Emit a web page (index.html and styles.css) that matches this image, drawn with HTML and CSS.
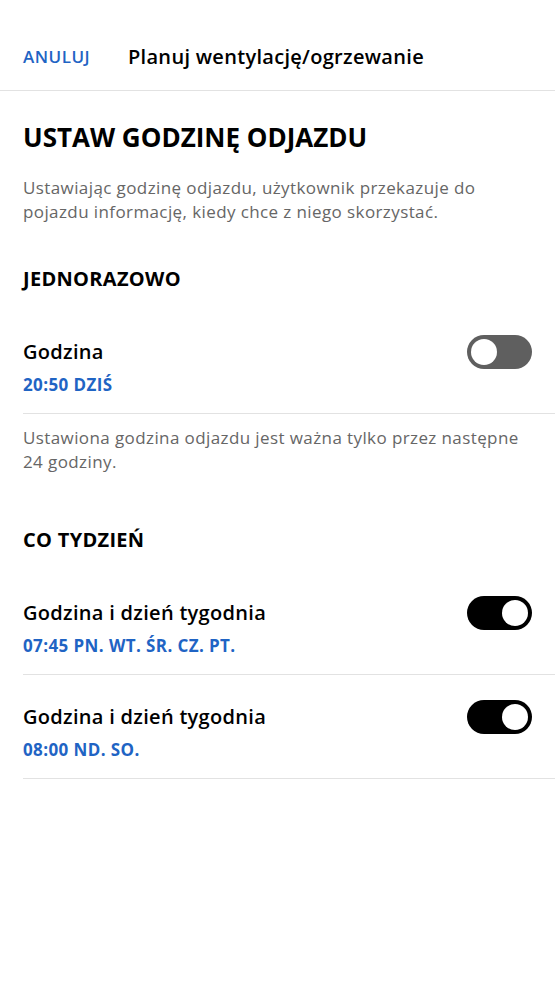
FILE: index.html
```html
<!DOCTYPE html>
<html lang="pl">
<head>
  <meta charset="UTF-8">
  <meta name="viewport" content="width=device-width, initial-scale=1.0">
  <title>Planuj wentylację/ogrzewanie</title>
  <link rel="stylesheet" href="styles.css">
</head>
<body>
  <div class="header">
    <span class="cancel">ANULUJ</span>
    <span class="header-title">Planuj wentylację/ogrzewanie</span>
  </div>

  <div class="content">
    <h1>USTAW GODZINĘ ODJAZDU</h1>
    <p class="intro">Ustawiając godzinę odjazdu, użytkownik przekazuje do pojazdu informację, kiedy chce z niego skorzystać.</p>

    <h2>JEDNORAZOWO</h2>
    <div class="row">
      <div class="row-text">
        <div class="row-title">Godzina</div>
        <div class="row-value">20:50 DZIŚ</div>
      </div>
      <div class="toggle"></div>
    </div>
    <p class="note">Ustawiona godzina odjazdu jest ważna tylko przez następne 24 godziny.</p>

    <h2 class="weekly">CO TYDZIEŃ</h2>
    <div class="row">
      <div class="row-text">
        <div class="row-title">Godzina i dzień tygodnia</div>
        <div class="row-value">07:45 PN. WT. ŚR. CZ. PT.</div>
      </div>
      <div class="toggle on"></div>
    </div>
    <div class="row">
      <div class="row-text">
        <div class="row-title">Godzina i dzień tygodnia</div>
        <div class="row-value">08:00 ND. SO.</div>
      </div>
      <div class="toggle on"></div>
    </div>
  </div>
</body>
</html>
```

FILE: styles.css
```css
body {
  margin: 0;
  background: #fff;
  font-family: "Open Sans", "Noto Sans", sans-serif;
  color: #000;
}
.header {
  display: flex;
  align-items: center;
  height: 91px;
  padding: 23px 23px 0;
  border-bottom: 1px solid #e2e2e2;
  box-sizing: border-box;
}
.cancel {
  color: #1f64c4;
  font-weight: 600;
  font-size: 17px;
  letter-spacing: 0.5px;
  width: 105px;
}
.header-title {
  font-size: 20px;
  font-weight: 600;
  letter-spacing: 0.3px;
}
.content {
  padding-left: 23px;
}
h1 {
  margin: 30px 0 0;
  font-size: 26px;
  font-weight: 700;
  line-height: 32px;
}
.intro,
.note {
  margin: 23px 23px 0 0;
  font-size: 17px;
  letter-spacing: 0.4px;
  line-height: 24px;
  color: #666;
}
h2 {
  margin: 43px 0 0;
  font-size: 20px;
  font-weight: 700;
  letter-spacing: 0.3px;
  line-height: 24px;
}
.row {
  display: flex;
  align-items: flex-start;
  justify-content: space-between;
  padding: 29px 23px 16px 0;
  border-bottom: 1px solid #e2e2e2;
}
h2 + .row {
  margin-top: 19px;
}
.row-title {
  font-size: 20px;
  font-weight: 600;
  letter-spacing: 0.3px;
  line-height: 26px;
}
.row-value {
  margin-top: 8px;
  font-size: 17px;
  font-weight: 700;
  letter-spacing: 0.4px;
  color: #1f64c4;
  line-height: 24px;
}
.toggle {
  width: 65px;
  height: 34px;
  border-radius: 17px;
  background: #5f5f5f;
  position: relative;
  margin-top: -4px;
}
.toggle::after {
  content: "";
  position: absolute;
  top: 4px;
  left: 4px;
  width: 26px;
  height: 26px;
  border-radius: 50%;
  background: #fff;
}
.toggle.on {
  background: #000;
}
.toggle.on::after {
  left: 35px;
}
.note {
  margin-top: 12px;
}
.weekly {
  margin-top: 54px;
}
```
